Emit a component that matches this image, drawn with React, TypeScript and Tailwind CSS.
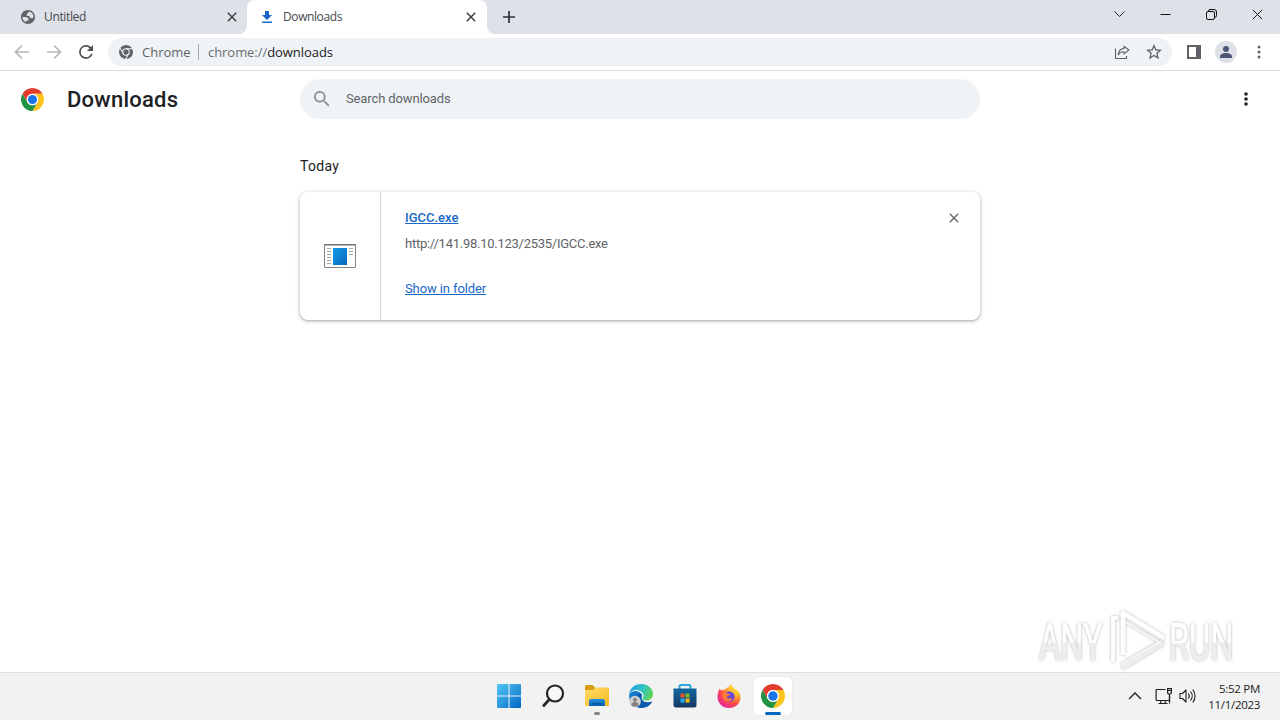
import { ReactNode } from "react";

const ChromeLogo = ({ size }: { size: number }) => (
  <svg width={size} height={size} viewBox="0 0 48 48">
    <path fill="#e33b2e" d="M24 12H44.78A24 24 0 0 0 3.22 12L13.6 30A12 12 0 0 1 24 12Z" />
    <path fill="#fcc31e" d="M34.39 30 24 48A24 24 0 0 0 44.78 12H24A12 12 0 0 1 34.39 30Z" />
    <path fill="#229342" d="M13.6 30 3.22 12A24 24 0 0 0 24 48L34.39 30A12 12 0 0 1 13.6 30Z" />
    <circle cx="24" cy="24" r="12" fill="#fff" />
    <circle cx="24" cy="24" r="9.5" fill="#1a73e8" />
  </svg>
);

const ChromeMono = () => (
  <svg width="14" height="14" viewBox="0 0 48 48">
    <circle cx="24" cy="24" r="24" fill="#5f6368" />
    <g stroke="#f0f3f6" strokeWidth="3.5" fill="none">
      <path d="M24 13H46M14.5 29.5 3.5 10.5M33.5 29.5 22.5 48.5" />
      <circle cx="24" cy="24" r="11" />
    </g>
  </svg>
);

const CloseIcon = ({ size, color, width }: { size: number; color: string; width: number }) => (
  <svg width={size} height={size} viewBox="0 0 10 10" stroke={color} strokeWidth={width}>
    <path d="m.8.8 8.4 8.4M9.2.8.8 9.2" />
  </svg>
);

const MoreIcon = ({ color, r, gap }: { color: string; r: number; gap: number }) => (
  <svg width="16" height="16" viewBox="0 0 16 16" fill={color}>
    <circle cx="8" cy={8 - gap} r={r} />
    <circle cx="8" cy="8" r={r} />
    <circle cx="8" cy={8 + gap} r={r} />
  </svg>
);

const GlobeIcon = () => (
  <svg width="14" height="14" viewBox="2 2 20 20">
    <path
      fill="#5f6368"
      d="M12 2C6.48 2 2 6.48 2 12s4.48 10 10 10 10-4.48 10-10S17.52 2 12 2zM4 12h4.4c3.4.02 4.9 1.73 4.6 5.1H9.5v2.5C6.2 18.500 4 15.500 4 12zm16 0c-.8 1.100-1.900 1.700-3.300 1.700-1.800 0-2.700-1-2.700-3h-3.700V8.400c0-1.500 1-2.300 2.700-2.300V4.100C17 4.500 20 8 20 12z"
    />
  </svg>
);

const TabStrip = () => (
  <div className="relative flex h-[34px] bg-[#dee1e8]">
    <div className="flex w-[247px] items-center pl-[21px] pr-[10px]">
      <GlobeIcon />
      <span className="ml-[9px] flex-1 text-[12px] leading-4 tracking-[-0.35px] text-[#45494d]">Untitled</span>
      <CloseIcon size={10} color="#3c4043" width={1.5} />
    </div>
    <div className="relative flex w-[240px] items-center rounded-t-lg bg-white pl-[14px] pr-[11px]">
      <svg className="absolute -left-2 bottom-0" width="8" height="8" fill="#fff">
        <path d="M8 0v8H0a8 8 0 0 0 8-8" />
      </svg>
      <svg className="absolute -right-2 bottom-0" width="8" height="8" fill="#fff">
        <path d="M0 0v8h8a8 8 0 0 1-8-8" />
      </svg>
      <svg width="12" height="12" viewBox="0 0 12 12" fill="#1967c9">
        <path d="M4 0h4v4h3L6 9 1 4h3zM1 10.400h10V12H1z" />
      </svg>
      <span className="ml-[10px] flex-1 text-[12px] leading-4 tracking-[-0.4px] text-[#45494d]">Downloads</span>
      <CloseIcon size={10} color="#3c4043" width={1.5} />
    </div>
    <svg className="ml-4 mt-[11px]" width="12" height="12" stroke="#2f3237" strokeWidth="1.700">
      <path d="M6 0v12M0 6h12" />
    </svg>
    <div className="ml-auto flex h-7 items-center gap-[35px] pr-[17px]">
      <svg width="11" height="7" fill="none" stroke="#202124" strokeWidth="1">
        <path d="m.5.500 5 5 5-5" />
      </svg>
      <svg width="11" height="11" stroke="#111" strokeWidth="1">
        <path d="M.5 5.500h10" />
      </svg>
      <svg width="11" height="11" fill="none" stroke="#111" strokeWidth="1">
        <rect x=".5" y="2.500" width="8" height="8" rx="1.500" />
        <path d="M2.500 2.500V2A1.500 1.500 0 0 1 4 .500H8A2.500 2.500 0 0 1 10.500 3v3.700A1.500 1.500 0 0 1 9 8.200h-.5" />
      </svg>
      <CloseIcon size={11} color="#111" width={0.9} />
    </div>
  </div>
);

const NavIcon = ({ children, color }: { children: ReactNode; color: string }) => (
  <svg width="16" height="16" viewBox="0 0 16 16" fill="none" stroke={color} strokeWidth="1.700">
    {children}
  </svg>
);

const Toolbar = () => (
  <div className="flex h-[37px] items-center border-b border-[#dcdde0] bg-white pl-[14px]">
    <div className="flex w-[94px] items-center gap-4">
      <NavIcon color="#b4b6b9">
        <path d="M15 8H2M8 1.500 1.500 8 8 14.500" />
      </NavIcon>
      <NavIcon color="#b4b6b9">
        <path d="M1 8h13M8 1.500 14.500 8 8 14.500" />
      </NavIcon>
      <svg className="ml-px" width="14" height="14" viewBox="3 3 18 18" fill="#4c4f53">
        <path d="M18.300 5.700A8.900 8.900 0 0 0 12 3.100a8.900 8.900 0 1 0 8.600 11.200h-2.300A6.700 6.700 0 1 1 12 5.300c1.900 0 3.500.800 4.700 2L13.200 10.800H21V3z" />
      </svg>
    </div>
    <div className="flex h-7 w-[1064px] items-center rounded-full bg-[#f0f3f6] pl-[11px] pr-[10px] text-[13px] leading-5">
      <ChromeMono />
      <span className="ml-[9px] w-[49px] text-[#5f6368]">Chrome</span>
      <span className="ml-[7px] mr-[9px] h-4 w-px bg-[#a5a8ac]" />
      <span className="flex-1 tracking-[-0.05px] text-[#6b6f74]">
        chrome://<span className="text-[#202124]">downloads</span>
      </span>
      <svg className="mr-4" width="16" height="16" viewBox="0 0 16 16" fill="none" stroke="#5f6368" strokeWidth="1.100">
        <path d="M1.500 4.500v10h11V12" />
        <path d="M10 2.300 14.900 6 10 9.900V7.700C7.300 7.700 5.500 8.700 4.200 11c.3-3.700 2.300-6.200 5.800-6.600z" strokeLinejoin="round" />
      </svg>
      <svg width="16" height="16" viewBox="2 2 20 20" fill="#5f6368">
        <path d="m22 9.240-7.190-.620L12 2 9.190 8.630 2 9.240l5.460 4.730L5.820 21 12 17.270 18.180 21l-1.630-7.030zM12 15.400l-3.760 2.270 1-4.280-3.320-2.880 4.380-.380L12 6.100l1.710 4.040 4.380.380-3.320 2.880 1 4.280z" />
      </svg>
    </div>
    <svg className="ml-[15px]" width="14" height="14">
      <path fill="#5f6368" fillRule="evenodd" d="M0 0h14v14H0zM2 2v10h7V2z" />
    </svg>
    <svg className="ml-[14px]" width="22" height="22" viewBox="0 0 22 22">
      <circle cx="11" cy="11" r="11" fill="#dde1e7" />
      <g fill="#4b5674">
        <circle cx="11" cy="8" r="3" />
        <path d="M5 17v-1.500C5 13.500 8 12 11 12s6 1.500 6 3.500V17z" />
      </g>
    </svg>
    <span className="ml-[13.500px]">
      <MoreIcon color="#5f6368" r={1.5} gap={5} />
    </span>
  </div>
);

const FileIcon = () => (
  <svg width="32" height="24" viewBox="0 0 32 24">
    <defs>
      <linearGradient id="exe" x1="0" y1="0" x2="1" y2="1">
        <stop stopColor="#159be8" />
        <stop offset="1" stopColor="#0668bd" />
      </linearGradient>
    </defs>
    <path fill="#fff" stroke="#858585" d="M.5.500h31v23H.5z" />
    <path stroke="#747474" strokeWidth="1.500" d="M0 .8h32" />
    <path stroke="#a3a3a3" d="M3 4.500h4M3 7.500h4M3 10.500h4M3 13.500h4M3 16.500h4M3 19.500h4M25 4.500h4M25 7.500h4M25 10.500h4" />
    <path fill="url(#exe)" d="M9 4h14v17H9z" />
  </svg>
);

const DownloadsPage = () => (
  <main className="flex-1 bg-white font-[Roboto,sans-serif]">
    <header className="flex h-14 items-center pl-[21px] pr-[26px]">
      <ChromeLogo size={23} />
      <h1 className="ml-[23px] mt-[2px] w-[233px] text-[22px] font-medium leading-7 tracking-[0.25px] text-[#202124]">Downloads</h1>
      <div className="flex h-10 w-[680px] items-center rounded-full bg-[#f0f3f6] pl-[14px]">
        <svg width="16" height="16" viewBox="3 3 18 18" fill="#8b8e92">
          <path d="M15.500 14h-.79l-.28-.270A6.500 6.500 0 1 0 13.730 14.430l.27.280v.79l5 5L20.490 19zM9.500 14a4.500 4.500 0 1 1 0-9 4.500 4.500 0 0 1 0 9z" />
        </svg>
        <span className="ml-4 text-[13px] leading-5 tracking-[-0.12px] text-[#5f6368]">Search downloads</span>
      </div>
      <span className="ml-auto">
        <MoreIcon color="#202124" r={1.8} gap={5} />
      </span>
    </header>
    <section className="mx-auto w-[680px] pt-[29px]">
      <h2 className="text-[14px] font-normal leading-5 tracking-[0.3px] text-[#202124]">Today</h2>
      <div className="mt-4 flex h-32 rounded-lg bg-white shadow-[0_1px_2px_rgba(60,64,67,0.3),0_1px_4px_1px_rgba(60,64,67,0.18)]">
        <div className="flex w-[81px] items-center justify-center border-r border-[#d5d6d8]">
          <FileIcon />
        </div>
        <div className="flex flex-1 flex-col items-start pl-6 pt-4 text-[13px] leading-5">
          <a className="font-medium text-[#1967c9] underline">IGCC.exe</a>
          <span className="mt-[6px] tracking-[-0.26px] text-[#5f6368]">http://141.98.10.123/2535/IGCC.exe</span>
          <a className="mt-[25px] tracking-[-0.1px] text-[#1967c9] underline">Show in folder</a>
        </div>
        <div className="pr-[21px] pt-[21px]">
          <CloseIcon size={10} color="#5f6368" width={1.300} />
        </div>
      </div>
    </section>
  </main>
);

const Watermark = () => (
  <svg className="absolute bottom-[43px] right-[38px]" width="210" height="72" viewBox="0 0 210 72">
    <defs>
      <linearGradient id="mark" x1="0" y1="0" x2="0" y2="1">
        <stop offset=".5" stopColor="#fff" />
        <stop offset=".52" stopColor="#ededed" />
      </linearGradient>
      <filter id="soft" x="-10%" y="-20%" width="120%" height="140%">
        <feDropShadow dx="0" dy="0" stdDeviation="1.800" floodColor="#777" floodOpacity=".6" />
      </filter>
    </defs>
    <g filter="url(#soft)">
      <g fill="url(#mark)" stroke="#fff" strokeOpacity=".4" strokeWidth=".6" fontFamily="Roboto" fontSize="51" fontWeight="400">
        <text transform="translate(7 55) scale(.640 1)">ANY</text>
        <text transform="translate(137 55) scale(.640 1)">RUN</text>
      </g>
      <g fill="none" strokeLinejoin="round">
        <path d="M90 62l41-25" stroke="#ededed" strokeWidth="6" />
        <path d="M91 50V8l41 25" stroke="#fdfdfd" strokeWidth="4.500" />
        <path d="M86 13h-5v44" stroke="#fdfdfd" strokeWidth="4" />
        <path d="M93 17 127 37 91 58" stroke="#f5f5f5" strokeWidth="2" />
      </g>
    </g>
  </svg>
);

const WindowsIcon = () => (
  <svg width="24" height="24" viewBox="0 0 24 24">
    <defs>
      <linearGradient id="win" x1="0" y1="0" x2="24" y2="24" gradientUnits="userSpaceOnUse">
        <stop stopColor="#55c8f5" />
        <stop offset="1" stopColor="#0067c5" />
      </linearGradient>
    </defs>
    <path fill="url(#win)" d="M1 0h10.500v11.500H0V1a1 1 0 0 1 1-1zM12.500 0H23a1 1 0 0 1 1 1v10.500H12.500zM0 12.500h11.500V24H1a1 1 0 0 1-1-1zM12.500 12.500H24V23a1 1 0 0 1-1 1H12.500z" />
  </svg>
);

const SearchIcon = () => (
  <svg width="24" height="24" viewBox="0 0 24 24" fill="none" stroke="#242424">
    <circle cx="14" cy="9.500" r="8" strokeWidth="2.200" fill="#f8f8f8" />
    <path d="M8.200 15.600 2.800 21.500" strokeWidth="2.800" strokeLinecap="round" />
  </svg>
);

const ExplorerIcon = () => (
  <svg width="26" height="24" viewBox="0 0 26 24">
    <defs>
      <linearGradient id="folder" x1="0" y1="0" x2="1" y2="1">
        <stop stopColor="#ffdc6b" />
        <stop offset="1" stopColor="#f7b921" />
      </linearGradient>
      <linearGradient id="tray" x1="0" y1="0" x2="0" y2="1">
        <stop stopColor="#2590df" />
        <stop offset="1" stopColor="#0a62b4" />
      </linearGradient>
    </defs>
    <path fill="#d99a13" d="M1 2.500A1.500 1.500 0 0 1 2.500 1h6L11 3.500V8H1z" />
    <path fill="url(#folder)" d="M1 6h8l2.500-2.500H24a1 1 0 0 1 1 1V21a1 1 0 0 1-1 1H2a1 1 0 0 1-1-1z" />
    <path fill="url(#tray)" d="M5 22v-5a2 2 0 0 1 2-2h12a2 2 0 0 1 2 2v5z" />
    <path fill="#0a559c" d="M8 19h10v1.500H8z" />
  </svg>
);

const EdgeIcon = () => (
  <svg width="26" height="26" viewBox="0 0 26 26">
    <defs>
      <linearGradient id="edgeTop" x1="0" y1=".3" x2="1" y2=".6">
        <stop stopColor="#249de0" />
        <stop offset=".5" stopColor="#2fc2c6" />
        <stop offset="1" stopColor="#61d552" />
      </linearGradient>
      <linearGradient id="edgeLow" x1="0" y1="0" x2="1" y2="1">
        <stop stopColor="#1683d8" />
        <stop offset="1" stopColor="#0b4da0" />
      </linearGradient>
    </defs>
    <path fill="#f4f6f8" d="M9 11h7v5H9z" />
    <path fill="url(#edgeLow)" d="M1 12C1 20 6 25 13 25c5 0 9-2.500 11-6.500-4 2-9 1.500-10.500-2-.8-2 .2-3.500.5-4.500C12 7.500 4 6 1 12z" />
    <path fill="#0c5aad" d="M9 14c0 6 4 10.500 9 10 3-1 5-3 6-5.500-5 2-10 .5-10.500-4 0-1.200.5-2 .5-3-2-1.500-5 .5-5 2.500z" />
    <path fill="url(#edgeTop)" d="M1 12C1.500 5.500 6.500 1 13 1c7 0 12 4.500 12 10 0 4-3 6.500-6.500 6.500-2.500 0-4-1-4-2 0-.8 1-1.200 1-3C15.500 9.500 12 7 8 7c-3.500 0-6 2-7 5z" />
    <circle cx="7" cy="18.500" r="5.800" fill="#d0d0ce" />
    <circle cx="7" cy="16.800" r="2.100" fill="#85817e" />
    <path fill="#85817e" d="M3.300 22.300c.2-4.300 7.200-4.300 7.400 0a5.800 5.800 0 0 1-7.400 0z" />
  </svg>
);

const StoreIcon = () => (
  <svg width="24" height="26" viewBox="0 0 24 26">
    <defs>
      <linearGradient id="bag" x1="0" y1="0" x2="0" y2="1">
        <stop stopColor="#11679f" />
        <stop offset="1" stopColor="#153763" />
      </linearGradient>
    </defs>
    <path fill="none" stroke="#2da4dc" strokeWidth="2" d="M6.500 6.500V3.500A1.500 1.500 0 0 1 8 2h8a1.500 1.500 0 0 1 1.500 1.500v3" />
    <path fill="url(#bag)" d="M.5 5.500h23V22a2.500 2.500 0 0 1-2.500 2.500H3A2.500 2.500 0 0 1 .500 22z" />
    <path fill="#f05325" d="M7.500 10.500h4v4h-4z" />
    <path fill="#80bb2d" d="M12.500 10.500h4v4h-4z" />
    <path fill="#24a9ea" d="M7.500 15.500h4v4h-4z" />
    <path fill="#fdb813" d="M12.500 15.500h4v4h-4z" />
  </svg>
);

const FirefoxIcon = () => (
  <svg width="24" height="24" viewBox="0 0 24 24">
    <defs>
      <radialGradient id="fox" cx=".8" cy=".15" r=".95">
        <stop stopColor="#fff04a" />
        <stop offset=".35" stopColor="#ffb52d" />
        <stop offset=".7" stopColor="#ff4d45" />
        <stop offset="1" stopColor="#e5279a" />
      </radialGradient>
    </defs>
    <path fill="url(#fox)" d="M2.800 4.600c.2 1 .6 1.400 1.200 1.900C5 5.800 6.500 5.600 7.600 6c1-1.600 2.400-2.500 3.700-2.800C12 3 12.500 2 13.500 0c1.500 3 4.500 4 6 6.700V5.200c2.500 2.300 4 5 4 8C23.500 19.500 18.500 24 12 24S.5 19 .500 12.700C.500 9.500 1.500 7 2.800 4.600z" />
    <circle cx="12.300" cy="12.500" r="5.300" fill="#7048d7" />
    <path fill="#ff7a32" d="M5.500 9.300c2.500-1.200 4.500-.4 5.500.5 1.400.1 2.300.4 2 .9-.6 1.100-2.500.9-3 2-.3 1.500 1.200 2.300 2.600 1.900 1-.3 2-.5 2.500.1-.9 2.600-3.500 3.300-6.100 2.300-3-1.700-4.500-4.500-3.500-7.700z" />
    <path fill="#ffc62f" d="M13.500 6.500c3.500.3 6 3.200 5.800 7.200 2-3.500.7-7.500-2.800-9.200-1.500-.8-3 .4-3 2z" />
  </svg>
);

const Tray = () => (
  <div className="absolute right-0 top-0 flex h-[46px] items-center pr-[19px]">
    <svg width="14" height="8" fill="none" stroke="#202020" strokeWidth="1.300">
      <path d="m1 7 6-6 6 6" />
    </svg>
    <svg className="ml-[13px]" width="18" height="18" viewBox="0 0 18 18" fill="none" stroke="#202020" strokeWidth="1.200">
      <path d="M10.500 2.500H2A.9.900 0 0 0 1.100 3.400v9.200a.9.900 0 0 0 .9.900h12.500V9M5.800 13.500v3M10.200 13.500v3M3.500 16.500h9" />
      <path d="M12.600 1.600h3.800v3.600a1.900 1.900 0 0 1-3.800 0zM12.600 3.500h3.800M14.500 7v9.500" />
    </svg>
    <svg className="ml-[6px]" width="18" height="16" viewBox="0 0 18 16" fill="none" stroke="#202020" strokeWidth="1.100">
      <path d="M1 5.500h2.500L7 2v12l-3.500-3.500H1z" strokeLinejoin="round" />
      <path d="M9.300 5.500a4 4 0 0 1 0 5M11.500 3.500a7 7 0 0 1 0 9M13.800 1.700a10 10 0 0 1 0 12.600" />
    </svg>
    <div className="mt-px ml-[9px] w-[55px] whitespace-nowrap pr-px text-right text-[11.5px] leading-4 tracking-[-0.3px] text-[#202020]">
      <div>5:52 PM</div>
      <div>11/1/2023</div>
    </div>
  </div>
);

const TaskItem = ({ children }: { children: ReactNode }) => (
  <div className="relative flex h-10 w-[38px] items-center justify-center">{children}</div>
);

const Taskbar = () => (
  <footer className="relative flex h-12 justify-center border-t border-[#e0e0e0] bg-[#f2f2f2] pt-[3px]">
    <div className="flex gap-[6px] pl-px">
      <TaskItem>
        <WindowsIcon />
      </TaskItem>
      <TaskItem>
        <SearchIcon />
      </TaskItem>
      <TaskItem>
        <ExplorerIcon />
        <span className="absolute bottom-px h-[3px] w-[6px] rounded-full bg-[#858585]" />
      </TaskItem>
      <TaskItem>
        <EdgeIcon />
      </TaskItem>
      <TaskItem>
        <StoreIcon />
      </TaskItem>
      <TaskItem>
        <FirefoxIcon />
      </TaskItem>
      <div className="relative mt-px flex h-[38px] w-[38px] items-center justify-center rounded bg-white shadow-[0_0_1px_rgba(0,0,0,0.2)]">
        <ChromeLogo size={24} />
        <span className="absolute bottom-0 h-[3px] w-4 rounded-full bg-[#0067c0]" />
      </div>
    </div>
    <Tray />
  </footer>
);

const App = () => (
  <div className="relative flex h-[720px] w-[1280px] flex-col overflow-hidden bg-white font-['Open_Sans','Noto_Sans',sans-serif]">
    <TabStrip />
    <Toolbar />
    <DownloadsPage />
    <Taskbar />
    <Watermark />
  </div>
);

export default App;
